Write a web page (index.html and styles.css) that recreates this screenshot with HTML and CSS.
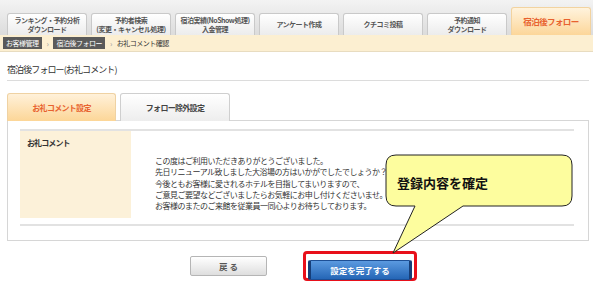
FILE: index.html
```html
<!DOCTYPE html>
<html lang="ja">
<head>
<meta charset="utf-8">
<link rel="stylesheet" href="styles.css">
</head>
<body>
<div class="page">
  <div class="tabbar">
    <div class="tab">ランキング・予約分析<br>ダウンロード</div>
    <div class="tab">予約者検索<br>(変更・キャンセル処理)</div>
    <div class="tab">宿泊実績(NoShow処理)<br>入金管理</div>
    <div class="tab">アンケート作成</div>
    <div class="tab">クチコミ投稿</div>
    <div class="tab">予約通知<br>ダウンロード</div>
    <div class="tab active">宿泊後フォロー</div>
  </div>
  <div class="crumbs">
    <span class="crumb-box">お客様管理</span>
    <span class="sep">›</span>
    <span class="crumb-box">宿泊後フォロー</span>
    <span class="sep">›</span>
    <span class="crumb-text">お礼コメント確認</span>
  </div>
  <div class="main">
    <h1 class="title">宿泊後フォロー(お礼コメント)</h1>
    <div class="subtabs">
      <div class="subtab active">お礼コメント設定</div>
      <div class="subtab">フォロー除外設定</div>
    </div>
    <div class="panel">
      <div class="table">
        <div class="label">お礼コメント</div>
        <div class="value">この度はご利用いただきありがとうございました。<br>先日リニューアル致しました大浴場の方はいかがでしたでしょうか？<br>今後ともお客様に愛されるホテルを目指してまいりますので、<br>ご意見ご要望などございましたらお気軽にお申し付けくださいませ。<br>お客様のまたのご来館を従業員一同心よりお待ちしております。</div>
      </div>
    </div>
    <div class="actions">
      <button class="btn back">戻 る</button>
      <div class="highlight"><button class="btn submit">設定を完了する</button></div>
    </div>
  </div>
  <svg class="callout" width="200" height="110" viewBox="0 0 200 110">
    <path d="M16,5 H182 Q192,5 192,15 V46 Q192,56 182,56 H83 L13,103 L35,56 H16 Q6,56 6,46 V15 Q6,5 16,5 Z" fill="#fdfd9e" stroke="#222" stroke-width="1"/>
    <text x="17" y="38" class="callout-text">登録内容を確定</text>
  </svg>
</div>
</body>
</html>
```

FILE: styles.css
```css
* { box-sizing: border-box; }
body {
  margin: 0;
  background: #fff;
  font-family: "Noto Sans CJK JP", "Noto Sans", sans-serif;
  color: #333;
}
.page {
  position: relative;
  width: 601px;
  height: 284px;
}
.tabbar {
  width: 593px;
  height: 35px;
  background: linear-gradient(#f3f3f3, #dcdcdc);
  display: flex;
  align-items: flex-end;
  padding-left: 7px;
  gap: 4px;
}
.tab {
  width: 80px;
  height: 22px;
  border: 1px solid #c9c9c9;
  border-bottom: none;
  border-radius: 3px 3px 0 0;
  background: linear-gradient(#ffffff, #ececec);
  font-size: 7px;
  letter-spacing: -0.5px;
  font-weight: bold;
  line-height: 9px;
  color: #555;
  display: flex;
  align-items: center;
  justify-content: center;
  text-align: center;
  white-space: nowrap;
}
.tab.active {
  height: 28px;
  border-color: #f2d3a0;
  background: linear-gradient(#fff3dd, #fcd699);
  color: #e8622f;
  font-size: 8.5px;
  letter-spacing: -0.6px;
}
.crumbs {
  width: 593px;
  height: 17px;
  background: #fcefd1;
  border-bottom: 1px solid #e8dcc0;
  display: flex;
  align-items: center;
  padding-left: 3px;
  font-size: 7px;
  letter-spacing: -0.5px;
}
.crumb-box {
  background: #5a5a5a;
  color: #fff;
  padding: 1px 3px;
  line-height: 10px;
}
.sep {
  color: #999;
  margin: 0 5px;
  font-size: 8px;
}
.crumb-text { color: #333; }
.main {
  padding: 0 4px 0 7px;
  width: 593px;
}
.title {
  margin: 11px 0 0;
  height: 18px;
  font-size: 9px;
  letter-spacing: -0.9px;
  font-weight: normal;
  line-height: 14px;
  color: #333;
  border-bottom: 1px solid #dcdcdc;
}
.subtabs {
  margin-top: 12px;
  display: flex;
  gap: 4px;
  height: 27px;
}
.subtab {
  width: 110px;
  height: 28px;
  border: 1px solid #cfcfcf;
  border-bottom: none;
  border-radius: 3px 3px 0 0;
  background: linear-gradient(#ffffff, #ededed);
  font-size: 8px;
  letter-spacing: -0.7px;
  font-weight: bold;
  color: #444;
  display: flex;
  align-items: center;
  justify-content: center;
  position: relative;
  z-index: 1;
}
.subtab.active {
  width: 109px;
  border-color: #efd2a3;
  background: linear-gradient(#fff1da, #fcd697);
  color: #e8622f;
}
.panel {
  height: 121px;
  border: 1px solid #d6d6d6;
  padding: 8px 14px 0 12px;
}
.table {
  display: flex;
  border-top: 2px solid #e2e2e2;
  border-bottom: 2px solid #e2e2e2;
  height: 97px;
  padding-bottom: 6px;
}
.label {
  width: 111px;
  background: #fcf1d9;
  font-size: 8px;
  letter-spacing: -0.9px;
  font-weight: bold;
  color: #333;
  padding: 6px 7px;
}
.value {
  flex: 1;
  padding: 24px 0 0 24px;
  font-size: 8px;
  letter-spacing: -0.5px;
  line-height: 11.3px;
  color: #333;
  white-space: nowrap;
}
.actions {
  display: flex;
  align-items: center;
  margin-top: 10px;
  padding-left: 183px;
  gap: 36px;
}
.btn {
  font-family: inherit;
  font-weight: bold;
  font-size: 8.5px;
  height: 20px;
  border-radius: 2px;
  padding: 0;
}
.back {
  width: 77px;
  border: 1px solid #b5b5b5;
  background: linear-gradient(#ffffff, #dedede);
  color: #555;
}
.highlight {
  border: 3px solid #e8101a;
  border-radius: 4px;
  padding: 1px 2px;
  width: 114px;
  height: 30px;
}
.submit {
  width: 104px;
  border: 1px solid #1d4f95;
  border-left: 3px solid #163e78;
  border-right: 3px solid #163e78;
  background: linear-gradient(#5b9ae0, #2566b6);
  color: #fff;
}
.callout {
  position: absolute;
  left: 380px;
  top: 150px;
}
.callout-text {
  font-size: 13px;
  font-weight: bold;
  fill: #111;
  font-family: "Noto Sans CJK JP", sans-serif;
}
```
